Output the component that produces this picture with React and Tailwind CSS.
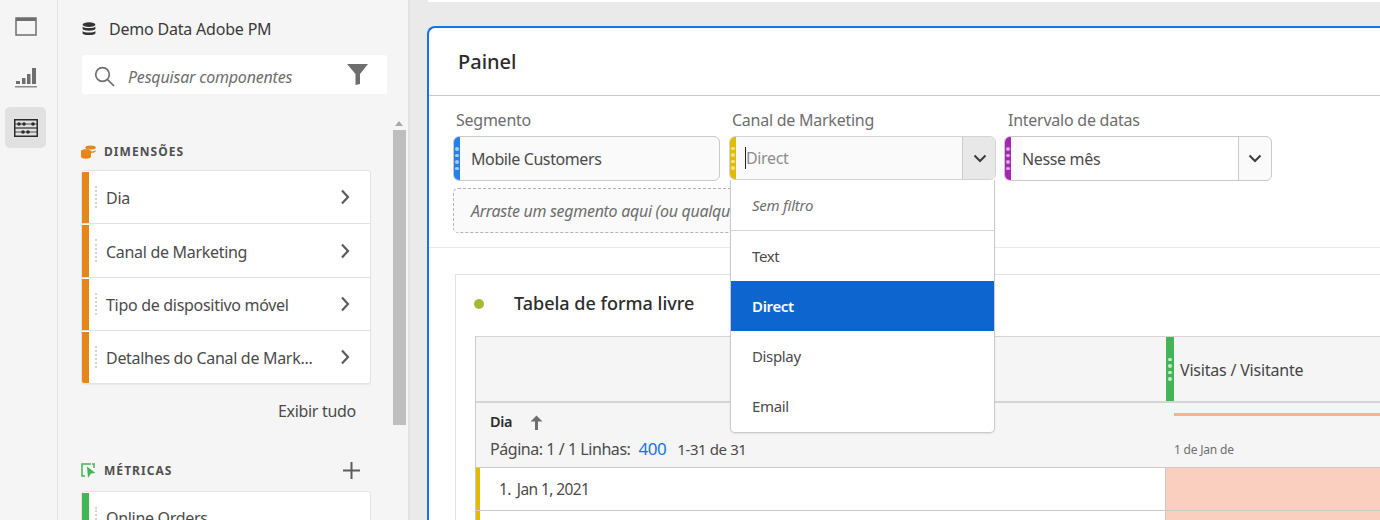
const font = { fontFamily: '"Noto Sans", sans-serif' };

function Grip({ className = "bg-white/60" }) {
  return (
    <div className="flex flex-col gap-[3px]">
      <span className={"block w-[3.5px] h-[3.5px] rounded-full " + className}></span>
      <span className={"block w-[3.5px] h-[3.5px] rounded-full " + className}></span>
      <span className={"block w-[3.5px] h-[3.5px] rounded-full " + className}></span>
      <span className={"block w-[3.5px] h-[3.5px] rounded-full " + className}></span>
    </div>
  );
}

function Chevron({ className = "" }) {
  return (
    <svg width="14" height="16" viewBox="0 0 14 16" className={className}>
      <path d="M4 1.5 L10 8 L4 14.5" fill="none" stroke="currentColor" strokeWidth="2.2" />
    </svg>
  );
}

function ChevronDown() {
  return (
    <svg width="14" height="9" viewBox="0 0 14 9" className="text-[#3c3c3c]">
      <path d="M1.5 1.5 L7 7 L12.5 1.5" fill="none" stroke="currentColor" strokeWidth="2" />
    </svg>
  );
}

function ListRow({ label, color, height = "h-[53px]", last, noChevron }) {
  return (
    <div className={"flex " + height + " " + (last ? "" : "border-b border-[#e1e1e1]")}>
      <div className={"w-[7px] mt-[1px] shrink-0 " + color}></div>
      <div className="ml-[6px] my-[15px] border-l-2 border-dotted border-[#d4d4d4]"></div>
      <div className="ml-[9px] pt-[2px] flex-1 flex items-center justify-between pr-[18px] text-[#4b4b4b] text-[16px] tracking-[-0.3px]">
        <span>{label}</span>
        {!noChevron && <Chevron className="text-[#5c5c5c] -mt-[2px]" />}
      </div>
    </div>
  );
}

function Rail() {
  return (
    <div className="w-[58px] shrink-0 h-full bg-[#f5f5f5] border-r border-[#e3e3e3] pt-[16px] pl-[5px] flex flex-col">
      <div className="w-[41px] h-[20px] flex items-center justify-center">
        <svg width="22" height="19" viewBox="0 0 22 19">
          <rect x="1" y="1" width="20" height="17" fill="none" stroke="#6e6e6e" strokeWidth="1.5" />
          <rect x="1" y="1" width="20" height="3" fill="#6e6e6e" />
        </svg>
      </div>
      <div className="w-[41px] h-[20px] mt-[31px] flex items-center justify-center">
        <svg width="22" height="21" viewBox="0 0 22 21">
          <rect x="1" y="14" width="4" height="3" fill="#6e6e6e" />
          <rect x="7" y="11" width="3.5" height="6" fill="#6e6e6e" />
          <rect x="12" y="7" width="3.5" height="10" fill="#6e6e6e" />
          <rect x="17" y="1" width="4" height="16" fill="#6e6e6e" />
          <rect x="0" y="19" width="22" height="1.5" fill="#8a8a8a" />
        </svg>
      </div>
      <div className="w-[41px] h-[41px] mt-[20px] bg-[#e1e1e1] rounded-[5px] flex items-center justify-center">
        <svg width="24" height="18" viewBox="0 0 24 18">
          <rect x="0.75" y="0.75" width="22.5" height="16.5" fill="none" stroke="#2c2c2c" strokeWidth="1.5" />
          <path d="M1 9 H23" stroke="#2c2c2c" strokeWidth="1.2" />
          <path d="M1 5 H23 M1 13 H23" stroke="#2c2c2c" strokeWidth="0.8" />
          <circle cx="5" cy="5" r="1.8" fill="#2c2c2c" />
          <circle cx="10" cy="5" r="1.8" fill="#2c2c2c" />
          <circle cx="19" cy="5" r="1.8" fill="#2c2c2c" />
          <circle cx="9" cy="13" r="1.8" fill="#2c2c2c" />
          <circle cx="14" cy="13" r="1.8" fill="#2c2c2c" />
        </svg>
      </div>
    </div>
  );
}

function Sidebar() {
  return (
    <div className="w-[352px] shrink-0 h-full bg-[#f5f5f5] border-r-2 border-[#e3e3e3] flex flex-col">
      <div className="h-[55px] pl-[24px] pt-[17px] flex items-start gap-[13px] text-[#3a3a3a] text-[16px] tracking-[-0.2px]">
        <svg width="14" height="14" viewBox="0 0 14 14" className="mt-[5px]">
          <ellipse cx="7" cy="2.6" rx="6.4" ry="2.4" fill="#333" />
          <path d="M0.6 4.6 C2 6.6 12 6.6 13.4 4.6 V7 C12 9.2 2 9.2 0.6 7 Z" fill="#333" />
          <path d="M0.6 9 C2 11 12 11 13.4 9 V11.4 C12 13.6 2 13.6 0.6 11.4 Z" fill="#333" />
        </svg>
        <span>Demo Data Adobe PM</span>
      </div>
      <div className="ml-[24px] w-[305px] h-[39px] bg-white rounded-[3px] flex items-center pl-[12px] pr-[19px]">
        <svg width="21" height="21" viewBox="0 0 21 21" className="mt-[3px]">
          <circle cx="8.5" cy="8.5" r="6.8" fill="none" stroke="#6e6e6e" strokeWidth="1.7" />
          <path d="M13.5 13.5 L20 20" stroke="#6e6e6e" strokeWidth="1.7" />
        </svg>
        <span className="ml-[13px] pt-[4px] flex-1 italic text-[#6e6e6e] text-[16px] tracking-[-0.2px]">Pesquisar componentes</span>
        <svg width="21" height="21" viewBox="0 0 21 21">
          <path d="M0 0 H21 L13 10 V20 L8.5 21 V10 Z" fill="#6e6e6e" />
        </svg>
      </div>
      <div className="flex-1 flex min-h-0 mt-[18px]">
        <div className="w-[290px] ml-[23px] shrink-0 pt-[31px]">
          <div className="flex items-center h-[18px] gap-[8px]">
            <svg width="15" height="14" viewBox="0 0 15 14">
              <ellipse cx="9.5" cy="2.4" rx="5.2" ry="2" fill="#e68619" />
              <path d="M0 6 C0 3.8 10 3.8 10 6 C10 7 14 6.4 14.6 4.8 V6.6 C13 8.2 10 8 10 8 V11.5 C10 14.4 0 14.4 0 11.5 Z" fill="#e68619" />
            </svg>
            <span className="text-[12px] font-bold tracking-[1.05px] text-[#505050]">DIMENSÕES</span>
          </div>
          <div className="mt-[9px] bg-white rounded-[3px] border border-[#e3e3e3] shadow-[0_1px_1px_rgba(0,0,0,0.05)] overflow-hidden">
            <ListRow label="Dia" color="bg-[#e68619]" />
            <ListRow label="Canal de Marketing" color="bg-[#e68619]" height="h-[54px]" />
            <ListRow label="Tipo de dispositivo móvel" color="bg-[#e68619]" />
            <ListRow label="Detalhes do Canal de Mark..." color="bg-[#e68619]" height="h-[52px]" last />
          </div>
          <div className="mt-[15px] pr-[15px] text-right text-[#4b4b4b] text-[16px] tracking-[-0.3px] leading-[24px]">Exibir tudo</div>
          <div className="mt-[38px] flex items-center h-[18px] gap-[8px] pr-[11px]">
            <svg width="15" height="15" viewBox="0 0 15 15">
              <path d="M10 1 H1 V13 H4" fill="none" stroke="#44b556" strokeWidth="1.5" />
              <path d="M11 1 H13 V5" fill="none" stroke="#44b556" strokeWidth="1.5" />
              <path d="M6 3.5 L14.5 10 L10 10.5 L7 15 Z" fill="#44b556" />
            </svg>
            <span className="flex-1 pt-[2px] text-[12px] font-bold tracking-[1.05px] text-[#505050]">MÉTRICAS</span>
            <svg width="17" height="17" viewBox="0 0 17 17">
              <path d="M8.5 0 V17 M0 8.5 H17" stroke="#5c5c5c" strokeWidth="2" />
            </svg>
          </div>
          <div className="mt-[12px] bg-white rounded-[3px] border border-[#e3e3e3]">
            <ListRow label="Online Orders" color="bg-[#44b556]" height="h-[50px]" noChevron last />
          </div>
        </div>
        <div className="ml-[20px] w-[16px] shrink-0 flex flex-col items-center">
          <svg width="8" height="5" viewBox="0 0 8 5" className="mt-[9px]">
            <path d="M0 5 L4 0 L8 5 Z" fill="#a8a8a8" />
          </svg>
          <div className="mt-[4px] w-[13px] h-[295px] bg-[#bebebe]"></div>
        </div>
      </div>
    </div>
  );
}

function FilterLabel({ children }) {
  return <div className="text-[#6e6e6e] text-[16px] tracking-[-0.25px] leading-[20px] pl-[3px]">{children}</div>;
}

function Filters() {
  return (
    <div className="h-[152px] pl-[24px] pt-[14px] border-b border-[#eaeaea] flex flex-col">
      <div className="flex gap-[8px]">
        <div className="w-[267px]">
          <FilterLabel>Segmento</FilterLabel>
          <div className="mt-[6px] h-[45px] flex rounded-[6px] border border-[#cacaca] bg-[#fafafa] overflow-hidden">
            <div className="w-[6px] bg-[#2680eb] flex items-center justify-center"><Grip /></div>
            <div className="pl-[11px] flex items-center text-[#4b4b4b] text-[16px] tracking-[-0.4px]">Mobile Customers</div>
          </div>
        </div>
        <div className="w-[267px] ml-[1px]">
          <FilterLabel>Canal de Marketing</FilterLabel>
          <div className="mt-[6px] h-[44px] flex rounded-[6px] border border-[#d4d4d4] bg-[#fafafa] overflow-hidden">
            <div className="w-[6px] bg-[#e2bb00] flex items-center justify-center"><Grip /></div>
            <div className="flex-1 pl-[9px] flex items-center">
              <span className="w-px h-[22px] bg-[#222]"></span>
              <span className="text-[#8e8e8e] text-[16px] tracking-[-0.35px]">Direct</span>
            </div>
            <div className="w-[33px] pl-[1px] bg-[#e8e8e8] border-l border-[#cacaca] flex items-center justify-center"><ChevronDown /></div>
          </div>
        </div>
        <div className="w-[268px]">
          <div className="pl-[1px]"><FilterLabel>Intervalo de datas</FilterLabel></div>
          <div className="mt-[6px] h-[45px] flex rounded-[6px] border border-[#cacaca] bg-[#fafafa] overflow-hidden">
            <div className="w-[6px] bg-[#a626b3] flex items-center justify-center"><Grip /></div>
            <div className="w-[11px]"></div>
            <div className="flex-1 bg-white flex items-center text-[#4b4b4b] text-[16px] tracking-[-0.35px] border-r border-[#cacaca]">Nesse mês</div>
            <div className="w-[32px] flex items-center justify-center"><ChevronDown /></div>
          </div>
        </div>
      </div>
      <div className="mt-[7px] w-[500px] h-[45px] rounded-[5px] border border-dashed border-[#b3b3b3] bg-[#fafafa] flex items-center pl-[17px] italic text-[#6e6e6e] text-[16px] tracking-[-0.3px] whitespace-nowrap overflow-hidden">
        Arraste um segmento aqui (ou qualquer outro componente)
      </div>
    </div>
  );
}

function Table() {
  return (
    <div className="ml-[26px] mt-[26px] border border-[#e3e3e3] border-r-0 w-[940px] h-[300px] bg-white">
      <div className="h-[61px] pl-[18px] pb-[4px] flex items-center">
        <span className="w-[10px] h-[10px] rounded-full bg-[#a8b834]"></span>
        <span className="ml-[30px] text-[18px] font-medium tracking-[0px] text-[#2c2c2c]">Tabela de forma livre</span>
      </div>
      <div className="ml-[19px] border-l border-[#cacaca]">
        <div className="grid grid-cols-[690px_1fr] h-[67px] bg-[#f5f5f5] border-t border-b-2 border-[#d4d4d4]">
          <div></div>
          <div className="flex h-full">
            <div className="w-[8px] bg-[#44b556] flex items-center justify-center"><Grip className="bg-white/70" /></div>
            <div className="pl-[6px] pt-[2px] flex items-center text-[#464646] text-[16px] tracking-[-0.2px]">Visitas / Visitante</div>
          </div>
        </div>
        <div className="grid grid-cols-[690px_1fr] h-[65px] bg-[#f5f5f5] border-b border-[#cacaca]">
          <div className="pl-[14px] pt-[8px]">
            <div className="flex items-center gap-[18px] h-[22px] text-[#2c2c2c] text-[14.5px] font-semibold tracking-[-0.3px]">
              <span>Dia</span>
              <svg width="13" height="15" viewBox="0 0 13 15">
                <path d="M6.5 0.5 L12.5 6.5 L8 6.5 V15 H5 V6.5 L0.5 6.5 Z" fill="#6e6e6e" />
              </svg>
            </div>
            <div className="mt-[6px] flex items-center text-[#4b4b4b] text-[16px] tracking-[-0.45px] leading-[20px] whitespace-nowrap">
              <span>Página: 1 / 1 Linhas:</span>
              <span className="ml-[8px] text-[#1473e6] text-[17px]">400</span>
              <span className="ml-[11px] text-[15px] tracking-[-0.4px]">1-31 de 31</span>
            </div>
          </div>
          <div className="pl-[8px] pt-[10px]">
            <div className="h-[3px] bg-[#f6b299]"></div>
            <div className="mt-[26px] text-[#6e6e6e] text-[12px] tracking-[-0.2px] leading-[16px]">1 de Jan de</div>
          </div>
        </div>
        <div className="grid grid-cols-[689px_1fr] h-[43px] border-b border-[#cacaca]">
          <div className="flex">
            <div className="w-[4px] bg-[#e2bb00]"></div>
            <div className="pl-[19px] pt-[2px] flex items-center text-[#4b4b4b] text-[15.5px] tracking-[-0.6px]">
              <span>1.</span>
              <span className="ml-[6px]">Jan 1, 2021</span>
            </div>
          </div>
          <div className="bg-[#facfbf] border-l border-[#cacaca]"></div>
        </div>
        <div className="grid grid-cols-[689px_1fr] h-[43px]">
          <div className="flex"><div className="w-[4px] bg-[#e2bb00]"></div></div>
          <div className="bg-[#facfbf] border-l border-[#cacaca]"></div>
        </div>
      </div>
    </div>
  );
}

function Dropdown() {
  const itemBase = "h-[50px] pl-[21px] pt-[1px] flex items-center text-[15px] tracking-[-0.35px]";
  return (
    <div className="absolute left-[301px] top-[152px] w-[265px] h-[253px] bg-white border border-[#cacaca] border-t-0 rounded-b-[5px] shadow-[0_1px_2px_rgba(0,0,0,0.08)]">
      <div className="h-[51px] pl-[21px] flex items-center italic text-[#6e6e6e] text-[15px] tracking-[-0.25px] border-b border-[#d4d4d4]">Sem filtro</div>
      <div className={itemBase + " text-[#4b4b4b]"}>Text</div>
      <div className={itemBase + " bg-[#0d66d0] text-white font-semibold"}>Direct</div>
      <div className={itemBase + " text-[#4b4b4b]"}>Display</div>
      <div className={itemBase + " text-[#4b4b4b]"}>Email</div>
    </div>
  );
}

export default function App() {
  return (
    <div className="flex w-[1380px] h-[520px] overflow-hidden bg-[#eaeaea]" style={font}>
      <Rail />
      <Sidebar />
      <div className="flex-1 min-w-0 h-full pl-[17px]">
        <div className="ml-[1px] h-[2px] bg-white"></div>
        <div className="relative mt-[24px] h-[600px] bg-white border-l-2 border-t-2 border-[#1473e6] rounded-tl-[8px]">
          <div className="h-[68px] pl-[29px] pt-[20px] border-b border-[#cacaca] text-[20px] font-medium tracking-[0px] text-[#2c2c2c] leading-[28px]">Painel</div>
          <Filters />
          <Table />
          <Dropdown />
        </div>
      </div>
    </div>
  );
}
